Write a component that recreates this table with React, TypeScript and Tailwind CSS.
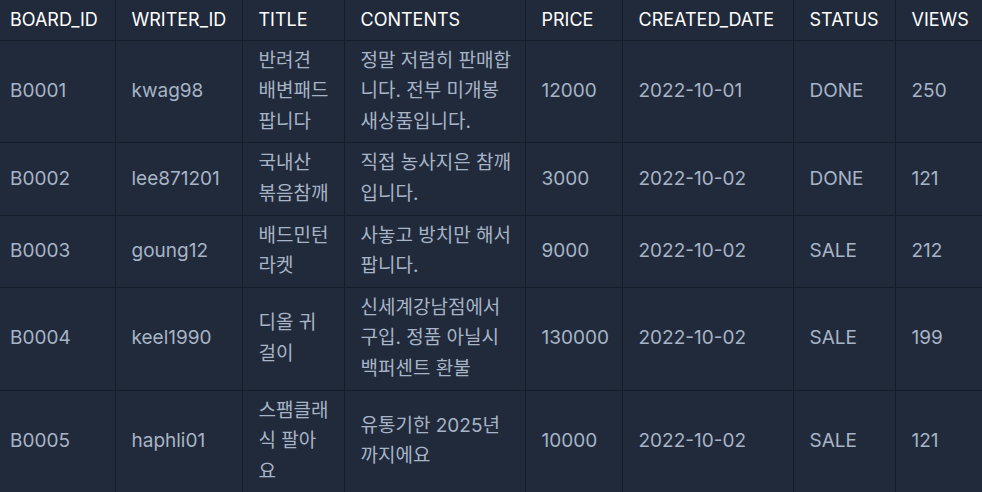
const columns = [
  { key: 'id', label: 'BOARD_ID', width: 'w-[115px]', pad: 'pl-[10px] pr-4' },
  { key: 'writer', label: 'WRITER_ID', width: 'w-[127px]', pad: 'px-4' },
  { key: 'title', label: 'TITLE', width: 'w-[102px]', pad: 'px-4' },
  { key: 'contents', label: 'CONTENTS', width: 'w-[181px]', pad: 'px-4' },
  { key: 'price', label: 'PRICE', width: 'w-[97px]', pad: 'px-4' },
  { key: 'created', label: 'CREATED_DATE', width: 'w-[171px]', pad: 'px-4' },
  { key: 'status', label: 'STATUS', width: 'w-[102px]', pad: 'px-4' },
  { key: 'views', label: 'VIEWS', width: 'w-[100px]', pad: 'px-4' },
] as const

type Row = {
  id: string
  writer: string
  title: string[]
  contents: string[]
  price: string
  created: string
  status: string
  views: string
}

// line breaks kept as in the board listing
const rows: Row[] = [
  {
    id: 'B0001',
    writer: 'kwag98',
    title: ['반려견', '배변패드', '팝니다'],
    contents: ['정말 저렴히 판매합', '니다. 전부 미개봉', '새상품입니다.'],
    price: '12000',
    created: '2022-10-01',
    status: 'DONE',
    views: '250',
  },
  {
    id: 'B0002',
    writer: 'lee871201',
    title: ['국내산', '볶음참깨'],
    contents: ['직접 농사지은 참깨', '입니다.'],
    price: '3000',
    created: '2022-10-02',
    status: 'DONE',
    views: '121',
  },
  {
    id: 'B0003',
    writer: 'goung12',
    title: ['배드민턴', '라켓'],
    contents: ['사놓고 방치만 해서', '팝니다.'],
    price: '9000',
    created: '2022-10-02',
    status: 'SALE',
    views: '212',
  },
  {
    id: 'B0004',
    writer: 'keel1990',
    title: ['디올 귀', '걸이'],
    contents: ['신세계강남점에서', '구입. 정품 아닐시', '백퍼센트 환불'],
    price: '130000',
    created: '2022-10-02',
    status: 'SALE',
    views: '199',
  },
  {
    id: 'B0005',
    writer: 'haphli01',
    title: ['스팸클래', '식 팔아', '요'],
    contents: ['유통기한 2025년', '까지에요'],
    price: '10000',
    created: '2022-10-02',
    status: 'SALE',
    views: '121',
  },
]

function Lines({ lines }: { lines: string[] }) {
  return (
    <>
      {lines.map((line, i) => (
        <span key={i} className="block whitespace-nowrap">
          {line}
        </span>
      ))}
    </>
  )
}

const cell = 'border-l border-[#161d2a] px-4 py-[5px] align-middle'

export default function App() {
  return (
    <div
      className="h-[492px] w-[982px] overflow-hidden bg-[#212a3b] leading-[30.6px]"
      style={{ fontFamily: 'Inter, "Noto Sans CJK KR", sans-serif' }}
    >
      <table className="w-[995px] table-fixed border-collapse text-left">
        <colgroup>
          {columns.map((c) => (
            <col key={c.key} className={c.width} />
          ))}
        </colgroup>
        <thead className="text-[18px]">
          <tr className="border-b border-[#161d2a]">
            {columns.map((c, i) => (
              <th
                key={c.key}
                className={`${c.pad} py-[4.5px] font-normal text-white ${i > 0 ? 'border-l border-[#161d2a]' : ''}`}
              >
                {c.label}
              </th>
            ))}
          </tr>
        </thead>
        <tbody className="text-[19px] text-[#a7b4c6]">
          {rows.map((r) => (
            <tr key={r.id} className="border-b border-[#161d2a]">
              <td className="py-[5px] pl-[10px] pr-4 align-middle">{r.id}</td>
              <td className={cell}>{r.writer}</td>
              <td className={cell}>
                <Lines lines={r.title} />
              </td>
              <td className={cell}>
                <Lines lines={r.contents} />
              </td>
              <td className={cell}>{r.price}</td>
              <td className={cell}>{r.created}</td>
              <td className={cell}>{r.status}</td>
              <td className={cell}>{r.views}</td>
            </tr>
          ))}
        </tbody>
      </table>
    </div>
  )
}
